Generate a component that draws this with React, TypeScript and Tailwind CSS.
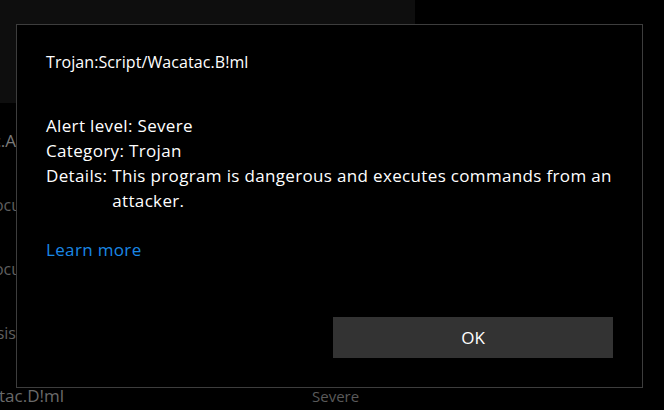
import { FC } from "react";

const font = { fontFamily: "'Open Sans', 'Noto Sans', sans-serif" };

const BackRow: FC<{ text: string; className?: string }> = ({ text, className }) => (
  <div className="h-[64px] flex items-center">
    <div className="w-[22px] flex justify-end whitespace-nowrap">
      <span className={className}>{text}</span>
    </div>
  </div>
);

const App: FC = () => {
  return (
    <div
      className="relative w-[664px] h-[410px] bg-black overflow-hidden text-white"
      style={font}
    >
      {/* app behind the dialog */}
      <div className="w-[415px] h-[103px] bg-[#0e0e0e]" />
      <div className="flex flex-col mt-[6px]">
        <BackRow text="Trojan:Script/Wacatac.A" className="text-[17px] text-[#7a7a7a] mr-[6px]" />
        <BackRow text="Documents" className="text-[16px] text-[#5f5f5f] mr-[-46px]" />
        <BackRow text="Documents" className="text-[16px] text-[#5f5f5f] mr-[-46px]" />
        <BackRow text="Analysis" className="text-[16px] text-[#5f5f5f] mr-[6px]" />
        <div className="h-[62px] flex items-center">
          <div className="w-[64px] flex justify-end whitespace-nowrap">
            <span className="text-[17px] text-[#6a6a6a]">Trojan:Script/Wacatac.D!ml</span>
          </div>
          <span className="ml-[248px] text-[15px] text-[#5a5a5a]">Severe</span>
        </div>
      </div>

      {/* dialog */}
      <div className="absolute left-[16px] top-[24px] w-[627px] h-[364px] border border-[#3d3d3d] bg-black flex flex-col px-[29px] pt-[27px] pb-[29px]">
        <div className="text-[16px] leading-[20px] tracking-[0.005em]">Trojan:Script/Wacatac.B!ml</div>
        <div className="mt-[41px] text-[17px] leading-[25px] tracking-[0.02em]">
          <div>Alert level: Severe</div>
          <div>Category: Trojan</div>
          <div className="flex gap-[5px]">
            <span className="shrink-0">Details:</span>
            <span className="w-[512px] shrink-0">
              This program is dangerous and executes commands from an attacker.
            </span>
          </div>
        </div>
        <a href="#" className="mt-[24px] text-[17px] leading-[25px] tracking-[0.02em] text-[#1a88e6]">
          Learn more
        </a>
        <div className="mt-auto flex justify-end">
          <button className="w-[280px] h-[41px] bg-[#333333] text-[17px] text-white">
            OK
          </button>
        </div>
      </div>
    </div>
  );
};

export default App;
